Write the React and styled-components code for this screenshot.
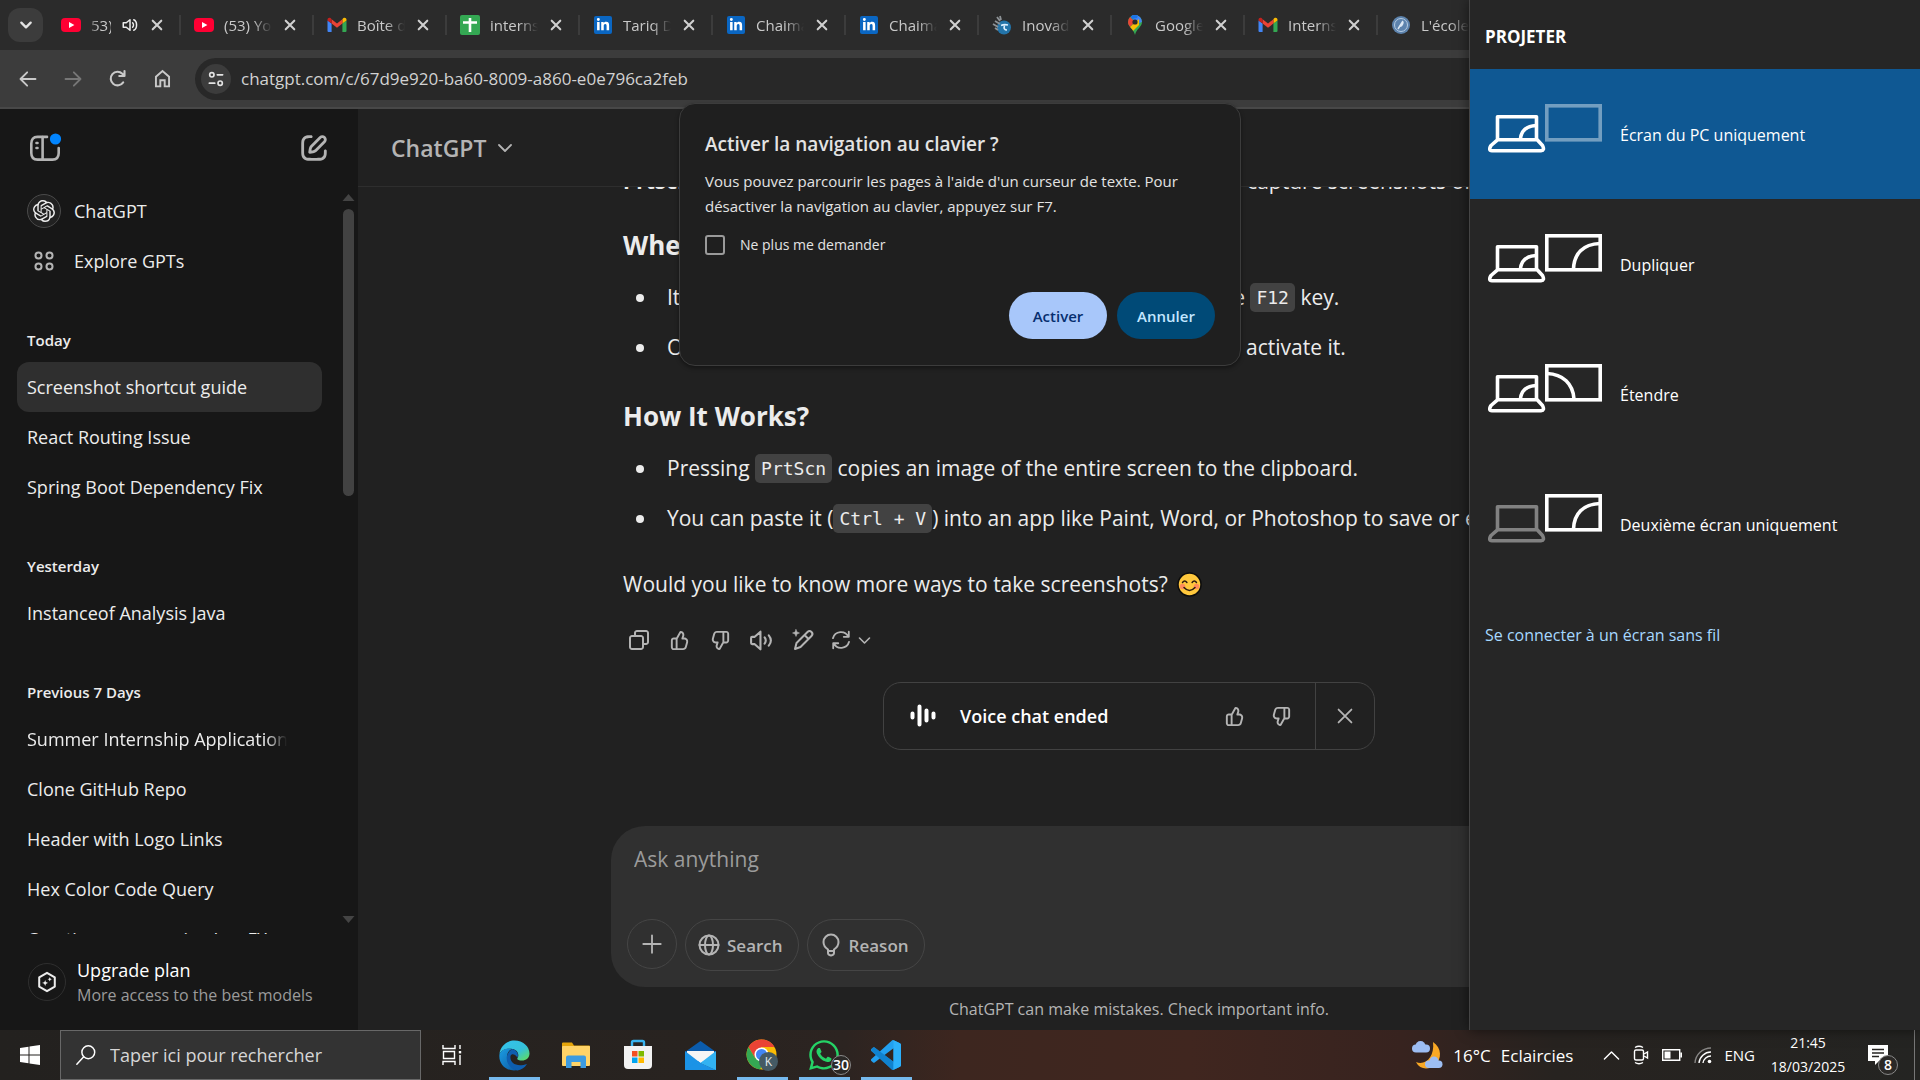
import React from "react";
import styled, { createGlobalStyle, css } from "styled-components";
import { SiOpenai } from "react-icons/si";
import { FaWhatsapp, FaLinkedinIn } from "react-icons/fa";

const Global = createGlobalStyle`
  *, *::before, *::after { box-sizing: border-box; }
  html, body, #root { margin: 0; height: 100%; }
  body {
    overflow: hidden;
    background: #212121;
    color: #ececec;
    font-family: "Open Sans", "Noto Sans", sans-serif;
    font-size: 16px;
  }
  button, input { font: inherit; color: inherit; background: none; border: 0; padding: 0; margin: 0; }
  button { cursor: pointer; }
  a { color: inherit; text-decoration: none; }
  h1, h2, h3, p, ul { margin: 0; padding: 0; }
  ul { list-style: none; }
  svg { display: block; flex: none; }
`;

const Desktop = styled.div`
  position: relative;
  display: flex;
  flex-direction: column;
  height: 100vh;
  overflow: hidden;
`;

/* ---------- shared drawing helpers ---------- */

const Stroke = ({ size = 24, box = 24, w = 2, children, ...rest }) => (
  <svg width={size} height={size} viewBox={`0 0 ${box} ${box}`} fill="none" stroke="currentColor"
    strokeWidth={w} strokeLinecap="round" strokeLinejoin="round" aria-hidden="true" {...rest}>
    {children}
  </svg>
);
const Solid = ({ size = 24, children, ...rest }) => (
  <svg width={size} height={size} viewBox="0 0 24 24" fill="currentColor" aria-hidden="true" {...rest}>
    {children}
  </svg>
);

const THUMB =
  "M12.1318 2.50389C12.3321 2.15338 12.7235 1.95768 13.124 2.00775L13.5778 2.06447C16.0449 2.37286 17.636 4.83353 16.9048 7.20993L16.354 8.99999H17.0722C19.7097 8.99999 21.6253 11.5079 20.9313 14.0525L19.5677 19.0525C19.0931 20.7927 17.5124 22 15.7086 22H6C4.34315 22 3 20.6568 3 19V12C3 10.3431 4.34315 8.99999 6 8.99999H8.25C8.38866 8.99999 8.51661 8.92558 8.58493 8.80494L12.1318 2.50389ZM10 20H15.7086C16.6105 20 17.4008 19.3964 17.6381 18.5262L19.0018 13.5262C19.3488 12.2539 18.391 11 17.0722 11H15C14.6827 11 14.3841 10.8494 14.1956 10.5941C14.0071 10.3388 13.9509 10.0092 14.0442 9.70591L14.9932 6.62175C15.3384 5.49984 14.6484 4.34036 13.5319 4.08468L10.3279 9.78656C10.23 9.97 10.12 10.13 10 10.28V20ZM8 11V20H6C5.44772 20 5 19.5523 5 19V12C5 11.4477 5.44772 11 6 11H8Z";
const ThumbUp = ({ size }) => <Solid size={size}><path fillRule="evenodd" d={THUMB} /></Solid>;
const ThumbDown = ({ size }) => (
  <Solid size={size}><path fillRule="evenodd" transform="rotate(180 12 12)" d={THUMB} /></Solid>
);
const CopyIcon = ({ size }) => (
  <Solid size={size}>
    <path fillRule="evenodd" d="M7 5C7 3.34315 8.34315 2 10 2H19C20.6569 2 22 3.34315 22 5V14C22 15.6569 20.6569 17 19 17H17V19C17 20.6569 15.6569 22 14 22H5C3.34315 22 2 20.6569 2 19V10C2 8.34315 3.34315 7 5 7H7V5ZM9 7H14C15.6569 7 17 8.34315 17 10V15H19C19.5523 15 20 14.5523 20 14V5C20 4.44772 19.5523 4 19 4H10C9.44772 4 9 4.44772 9 5V7ZM5 9C4.44772 9 4 9.44772 4 10V19C4 19.5523 4.44772 20 5 20H14C14.5523 20 15 19.5523 15 19V10C15 9.44772 14.5523 9 14 9H5Z" />
  </Solid>
);
const NewChatIcon = () => (
  <Solid size={34}>
    <path d="M15.6729 3.91287C16.8918 2.69392 18.8682 2.69392 20.0871 3.91287C21.3061 5.13182 21.3061 7.10813 20.0871 8.32708L14.1499 14.2643C13.3849 15.0293 12.3925 15.5255 11.3215 15.6785L9.14142 15.9899C8.82983 16.0344 8.51546 15.9297 8.29289 15.7071C8.07033 15.4845 7.96554 15.1701 8.01005 14.8586L8.32149 12.6785C8.47449 11.6075 8.97072 10.615 9.7357 9.85006L15.6729 3.91287ZM18.6729 5.32708C18.235 4.88918 17.525 4.88918 17.0871 5.32708L11.1499 11.2643C10.6909 11.7233 10.3932 12.3187 10.3014 12.9613L10.1785 13.8215L11.0386 13.6986C11.6812 13.6068 12.2767 13.3091 12.7357 12.8501L18.6729 6.91287C19.1108 6.47497 19.1108 5.76499 18.6729 5.32708ZM11 3.99929C11.0004 4.55157 10.5531 4.99963 10.0008 5.00007C9.00227 5.00084 8.29769 5.00827 7.74651 5.06064C7.20685 5.11191 6.88488 5.20117 6.63803 5.32695C6.07354 5.61457 5.6146 6.07351 5.32698 6.63799C5.19279 6.90135 5.10062 7.24904 5.05118 7.8542C5.00078 8.47105 5 9.26336 5 10.4V13.6C5 14.7366 5.00078 15.5289 5.05118 16.1457C5.10062 16.7509 5.19279 17.0986 5.32698 17.3619C5.6146 17.9264 6.07354 18.3854 6.63803 18.673C6.90138 18.8072 7.24907 18.8993 7.85424 18.9488C8.47108 18.9992 9.26339 19 10.4 19H13.6C14.7366 19 15.5289 18.9992 16.1458 18.9488C16.7509 18.8993 17.0986 18.8072 17.362 18.673C17.9265 18.3854 18.3854 17.9264 18.673 17.3619C18.7988 17.1151 18.8881 16.7931 18.9393 16.2535C18.9917 15.7023 18.9991 14.9977 18.9999 13.9992C19.0003 13.4469 19.4484 12.9995 20.0007 13C20.553 13.0004 21.0003 13.4485 20.9999 14.0007C20.9991 14.9789 20.9932 15.7808 20.9304 16.4426C20.8664 17.116 20.7385 17.7136 20.455 18.2699C19.9757 19.2107 19.2108 19.9756 18.27 20.455C17.6777 20.7568 17.0375 20.8826 16.3086 20.9421C15.6008 21 14.7266 21 13.6428 21H10.3572C9.27339 21 8.39925 21 7.69138 20.9421C6.96253 20.8826 6.32234 20.7568 5.73005 20.455C4.78924 19.9756 4.02433 19.2107 3.54497 18.2699C3.24318 17.6776 3.11737 17.0374 3.05782 16.3086C2.99998 15.6007 2.99999 14.7266 3 13.6428V10.3572C2.99999 9.27337 2.99998 8.39922 3.05782 7.69134C3.11737 6.96249 3.24318 6.3223 3.54497 5.73001C4.02433 4.7892 4.78924 4.0243 5.73005 3.54493C6.28633 3.26149 6.88399 3.13358 7.55735 3.06961C8.21919 3.00673 9.02103 3.00083 9.99922 3.00007C10.5515 2.99964 10.9996 3.447 11 3.99929Z" />
  </Solid>
);
const SidebarIcon = () => (
  <svg width="34" height="34" viewBox="0 0 34 34" fill="none" stroke="currentColor" strokeWidth="2.6" strokeLinecap="round" aria-hidden="true">
    <path d="M19 5.9H9.5Q3.3 5.9 3.3 12.5V22Q3.3 28.600 9.500 28.600H24.500Q30.700 28.600 30.700 22V17" />
    <path d="M14.600 6v22.600M8.500 12h1M8.500 17h1" />
    <circle cx="27.500" cy="8" r="5.600" fill="#0285ff" stroke="none" />
  </svg>
);
const ChevronDown = ({ size = 18, w = 2 }) => <Stroke size={size} w={w}><path d="M4 8l8 8 8-8" /></Stroke>;
const CloseX = ({ size = 12, w = 2.4 }) => <Stroke size={size} w={w} box={14}><path d="M2 2l10 10M12 2L2 12" /></Stroke>;

/* ---------- browser: tab strip ---------- */

const TabStrip = styled.div`
  display: flex;
  align-items: center;
  flex: none;
  height: 50px;
  padding-left: 8px;
  background: #2b2b2b;
  overflow: hidden;
`;
const TabSearch = styled.button`
  display: grid;
  place-items: center;
  flex: none;
  width: 35px;
  height: 34px;
  margin-right: 5px;
  border-radius: 12px;
  background: #3c3c3c;
  color: #e3e3e3;
`;
const Tab = styled.div`
  display: flex;
  align-items: center;
  flex: none;
  gap: 10px;
  width: 133px;
  height: 20px;
  padding: 0 14px 0 13px;
  border-right: 2px solid #3c3c3c;
`;
const TabTitle = styled.span`
  flex: 1;
  min-width: 0;
  overflow: hidden;
  white-space: nowrap;
  font-size: 15px;
  line-height: 20px;
  color: #c9c9c9;
  ${(p) => !p.$short && css`mask-image: linear-gradient(90deg, #000 60%, transparent);`}
  ${(p) => p.$short && css`mask-image: linear-gradient(90deg, #0006, #000 40%);`}
`;
const TabClose = styled.button`
  display: grid;
  place-items: center;
  width: 16px;
  height: 20px;
  color: #d0d0d0;
`;
const LinkedinTile = styled.span`
  display: grid;
  place-items: center;
  flex: none;
  width: 18px;
  height: 18px;
  margin: 0 1px;
  border-radius: 2px;
  background: #0a66c2;
  color: #fff;
  font-size: 14px;
`;

const YoutubeIcon = () => (
  <svg width="20" height="20" viewBox="0 0 20 20"><rect y="3" width="20" height="14" rx="4" fill="#ff0033" /><path d="M8 7l5.4 3L8 13z" fill="#fff" /></svg>
);
const GmailIcon = () => (
  <svg width="20" height="20" viewBox="0 0 20 20">
    <path d="M1 17h3.6V8.6L.5 5.4V16q0 1 1 1z" fill="#4285f4" />
    <path d="M15.4 17H18.5q1 0 1-1V5.4l-4.1 3.2z" fill="#34a853" />
    <path d="M15.4 4.3v4.3l4.1-3V4.8c0-2-1.9-2.6-3.3-1.6z" fill="#fbbc04" />
    <path d="M4.6 8.6V4.3L10 8.4l5.4-4.1v4.3L10 12.7z" fill="#ea4335" />
    <path d="M.5 4.8v.8l4.1 3V4.3l-.8-1.1C2.4 2.2.5 2.8.5 4.8z" fill="#c5221f" />
  </svg>
);
const SheetsIcon = () => (
  <svg width="20" height="20" viewBox="0 0 20 20"><rect width="20" height="20" rx="2" fill="#34a853" /><path d="M10 3v14M3 7.5h14" stroke="#fff" strokeWidth="2.6" /></svg>
);
const MapsIcon = () => (
  <svg width="20" height="20" viewBox="0 0 20 20">
    <defs><clipPath id="pin"><path d="M10 0a7 7 0 0 1 7 7c0 5-5.500 6.500-7 13C8.500 13.500 3 12 3 7a7 7 0 0 1 7-7z" /></clipPath></defs>
    <g clipPath="url(#pin)">
      <path d="M0 0h20v20H0z" fill="#34a853" /><path d="M4 -2L20 -2V5L13 9 10 7z" fill="#4285f4" />
      <path d="M0 4L5 2l5 5-6 6H0z" fill="#ea4335" /><path d="M4 13l10-9 0 6-7 7z" fill="#fbbc04" />
      <path d="M4 -2H14L12 3 7 4z" fill="#1a73e8" />
    </g>
    <circle cx="10" cy="7" r="2.600" fill="#2b2b2b" />
  </svg>
);
const InovaIcon = () => (
  <svg width="20" height="20" viewBox="0 0 20 20">
    <circle cx="12" cy="12.500" r="7" fill="#2374a9" />
    <path d="M9 10.500c2-1 5-1 7-.5M12.500 10.500c-1 3 0 4.500 2.500 4.500" stroke="#dcefff" strokeWidth="1.600" fill="none" />
    <path d="M3 6l5 3M1 9l5 3M5 2l3 4M8 1l1 4M3 13l3 2" stroke="#8d9296" strokeWidth="1.800" />
  </svg>
);
const SchoolIcon = () => (
  <svg width="20" height="20" viewBox="0 0 20 20">
    <circle cx="10" cy="10" r="9" fill="#5d83ad" /><circle cx="10" cy="10" r="6.500" fill="none" stroke="#b5cbe2" />
    <path d="M7 14l5-8M8 11c2 1 4-1 4-4" stroke="#dbe7f3" strokeWidth="1.500" fill="none" />
  </svg>
);
const InIcon = () => <LinkedinTile><FaLinkedinIn /></LinkedinTile>;
const SoundIcon = () => (
  <Stroke size={18} w={2}><path d="M3 9v6h4l5 4V5L7 9zM15.500 9c1.500 1.500 1.500 4.500 0 6M17 5c5 2 5 12 0 14" /></Stroke>
);

const TABS = [
  { icon: YoutubeIcon, title: "53)", sound: true },
  { icon: YoutubeIcon, title: "(53) YouTube" },
  { icon: GmailIcon, title: "Boîte de réception" },
  { icon: SheetsIcon, title: "internship" },
  { icon: InIcon, title: "Tariq Dahbi" },
  { icon: InIcon, title: "Chaimae" },
  { icon: InIcon, title: "Chaimae" },
  { icon: InovaIcon, title: "Inovadis" },
  { icon: MapsIcon, title: "Google Maps" },
  { icon: GmailIcon, title: "Internship" },
  { icon: SchoolIcon, title: "L'école" },
];

/* ---------- browser: toolbar ---------- */

const Toolbar = styled.div`
  display: flex;
  align-items: center;
  flex: none;
  height: 59px;
  padding-left: 5px;
  padding-right: 12px;
  background: #3c3c3c;
  border-bottom: 2px solid #484848;
`;
const NavButton = styled.button`
  display: grid;
  place-items: center;
  flex: none;
  width: 45px;
  height: 42px;
  color: ${(p) => (p.disabled ? "#777" : "#c9c9c9")};
`;
const AddressBar = styled.label`
  display: flex;
  align-items: center;
  flex: 1;
  gap: 10px;
  height: 42px;
  margin-left: 10px;
  padding-left: 6px;
  border-radius: 21px;
  background: #282828;
`;
const SiteInfo = styled.span`
  display: grid;
  place-items: center;
  width: 30px;
  height: 30px;
  border-radius: 50%;
  background: #3c3c3c;
  color: #e3e3e3;
`;
const UrlInput = styled.input`
  flex: 1;
  min-width: 0;
  font-size: 17px;
  line-height: 24px;
  color: #d2d2d2;
  outline: none;
`;

/* ---------- chat page ---------- */

const Page = styled.div`
  display: flex;
  flex: 1;
  min-height: 0;
`;
const Sidebar = styled.aside`
  display: flex;
  flex-direction: column;
  flex: none;
  width: 358px;
  background: #171717;
`;
const SidebarTop = styled.div`
  display: flex;
  align-items: center;
  justify-content: space-between;
  flex: none;
  height: 77px;
  padding: 0 27px 0 28px;
  color: #b4b4b4;
`;
const IconButton = styled.button`
  display: grid;
  place-items: center;
  color: inherit;
`;
const SidebarScroll = styled.div`
  display: flex;
  justify-content: space-between;
  flex: 1;
  min-height: 0;
  padding: 0 3px 0 17px;
`;
const History = styled.nav`
  width: 305px;
  overflow: hidden;
`;
const GroupTitle = styled.h3`
  height: 42px;
  margin-top: 34px;
  padding-left: 10px;
  font-size: 15px;
  font-weight: 600;
  line-height: 41px;
`;
const HistoryLink = styled.a`
  display: flex;
  align-items: center;
  gap: 13px;
  height: 50px;
  padding: 0 35px 0 10px;
  border-radius: 12px;
  font-size: 18px;
  line-height: 24px;
  white-space: nowrap;
  background: ${(p) => (p.$active ? "#2f2f2f" : "transparent")};
`;
const LinkText = styled.span`
  min-width: 0;
  overflow: hidden;
  ${(p) => p.$fade && css`mask-image: linear-gradient(90deg, #000 92%, transparent);`}
`;
const RoundBadge = styled.span`
  display: grid;
  place-items: center;
  flex: none;
  width: 34px;
  height: 34px;
  border: 1px solid ${(p) => (p.$plain ? "transparent" : "#4a4a4a")};
  border-radius: 50%;
  background: ${(p) => (p.$plain ? "transparent" : "#212121")};
  color: ${(p) => (p.$plain ? "#b4b4b4" : "#ececec")};
  font-size: 22px;
`;
const Scrollbar = styled.div`
  display: flex;
  flex-direction: column;
  align-items: center;
  width: 13px;
  padding: 8px 0 11px;
  color: #444;
`;
const Thumb = styled.div`
  width: 11px;
  height: 287px;
  margin: 8px 0 auto;
  border-radius: 6px;
  background: #424242;
`;
const Upgrade = styled.a`
  display: flex;
  align-items: center;
  flex: none;
  gap: 11px;
  height: 96px;
  padding-left: 28px;
`;
const UpgradeBadge = styled.span`
  display: grid;
  place-items: center;
  width: 38px;
  height: 38px;
  border: 1px solid #2f2f2f;
  border-radius: 50%;
`;
const UpgradeTitle = styled.span`
  display: block;
  margin-top: 2px;
  font-size: 18px;
  line-height: 25px;
  color: #fff;
`;
const UpgradeNote = styled.span`
  display: block;
  font-size: 16px;
  line-height: 25px;
  color: #9b9b9b;
`;

const Main = styled.main`
  display: flex;
  flex-direction: column;
  flex: 1;
  min-width: 0;
  background: #212121;
`;
const ChatHeader = styled.header`
  display: flex;
  align-items: center;
  flex: none;
  height: 78px;
  padding: 0 33px;
  border-bottom: 1px solid #2e2e2e;
`;
const ModelButton = styled.button`
  display: flex;
  align-items: center;
  gap: 10px;
  font-size: 23px;
  font-weight: 600;
  line-height: 32px;
  color: #b4b4b4;
`;
const Thread = styled.div`
  display: flex;
  flex-direction: column;
  justify-content: flex-end;
  align-items: center;
  flex: 1;
  min-height: 0;
  padding: 0 20px 76px 0;
  overflow: hidden;
`;
const Message = styled.article`
  flex: none;
  width: 100%;
  max-width: 1012px;
  font-size: 21px;
  line-height: 35px;
  white-space: nowrap;
`;
const MessageHeading = styled.h2`
  margin: 29px 0 17px;
  font-size: 26px;
  font-weight: 700;
  line-height: 35px;
  ul + & { margin-top: 34px; }
`;
const Bullets = styled.ul`
  display: grid;
  gap: 15px;
`;
const Bullet = styled.li`
  display: flex;
  align-items: center;
  height: 35px;
  white-space: pre;
  &::before {
    content: "";
    flex: none;
    width: 8px;
    height: 8px;
    margin: 0 23px 0 13px;
    border-radius: 50%;
    background: #ececec;
  }
`;
const Closing = styled.p`
  display: flex;
  align-items: center;
  gap: 9px;
  margin-top: 31px;
`;
const Code = styled.code`
  height: 29px;
  padding: 0 6px;
  border-radius: 5px;
  background: #424242;
  font-family: "DejaVu Sans Mono", monospace;
  font-size: 18px;
  line-height: 29px;
`;
const Actions = styled.div`
  display: flex;
  margin: 18px 0 22px -5px;
  color: #b4b4b4;
`;
const Action = styled.button`
  display: flex;
  align-items: center;
  justify-content: center;
  gap: 5px;
  width: ${(p) => (p.$wide ? "56px" : "41px")};
  height: 40px;
`;
const VoiceCard = styled.section`
  display: flex;
  align-items: stretch;
  flex: none;
  width: 492px;
  height: 68px;
  border: 1px solid #424242;
  border-radius: 18px;
  color: #b4b4b4;
`;
const VoiceBody = styled.div`
  display: flex;
  align-items: center;
  flex: 1;
  gap: 24px;
  padding: 0 22px 0 26px;
`;
const VoiceTitle = styled.strong`
  flex: 1;
  font-size: 18px;
  font-weight: 600;
  line-height: 25px;
  color: #fff;
`;
const VoiceClose = styled.button`
  display: grid;
  place-items: center;
  width: 59px;
  border-left: 1px solid #424242;
`;
const Composer = styled.form`
  display: flex;
  flex-direction: column;
  align-self: center;
  flex: none;
  width: 100%;
  max-width: 1056px;
  height: 161px;
  padding: 16px 16px 0;
  border-radius: 34px;
  background: #303030;
`;
const Prompt = styled.input`
  height: 34px;
  margin: 0 7px 43px;
  font-size: 21px;
  outline: none;
  &::placeholder { color: #9b9b9b; opacity: 1; }
`;
const Tools = styled.div`
  display: flex;
  align-items: flex-start;
  gap: 8px;
`;
const Tool = styled.button`
  display: flex;
  align-items: center;
  justify-content: center;
  gap: 6px;
  height: ${(p) => (p.$round ? "50px" : "52px")};
  ${(p) => (p.$round ? "width: 50px;" : "padding: 0 15px 0 11px;")}
  border: 1px solid #454545;
  border-radius: 26px;
  font-size: 17px;
  font-weight: 600;
  color: #b4b4b4;
`;
const Notice = styled.p`
  flex: none;
  height: 43px;
  font-size: 16px;
  line-height: 45px;
  text-align: center;
  color: #b4b4b4;
`;

/* ---------- caret browsing dialog ---------- */

const Dialog = styled.section`
  position: absolute;
  top: 103px;
  left: 50%;
  transform: translateX(-50%);
  width: 562px;
  padding: 25px 25px 26px;
  border: 1px solid #3c3c3c;
  border-radius: 16px;
  background: #1f1f1f;
  box-shadow: 0 2px 4px #0006;
  color: #e3e3e3;
`;
const DialogTitle = styled.h2`
  margin-bottom: 10px;
  font-size: 19px;
  font-weight: 600;
  line-height: 30px;
`;
const DialogText = styled.p`
  font-size: 15px;
  line-height: 25px;
`;
const CheckRow = styled.label`
  display: flex;
  align-items: center;
  gap: 15px;
  margin: 15px 0 36px;
  font-size: 14px;
  line-height: 22px;
`;
const Check = styled.input.attrs({ type: "checkbox" })`
  appearance: none;
  width: 20px;
  height: 20px;
  border: 2px solid #9a9a9a;
  border-radius: 3px;
`;
const DialogButtons = styled.div`
  display: flex;
  justify-content: flex-end;
  gap: 10px;
`;
const DialogButton = styled.button`
  width: 98px;
  height: 47px;
  border-radius: 24px;
  font-size: 15px;
  font-weight: 600;
  background: ${(p) => (p.$primary ? "#a8c7fa" : "#004a77")};
  color: ${(p) => (p.$primary ? "#062e6f" : "#c2e7ff")};
`;

/* ---------- projection flyout ---------- */

const Flyout = styled.aside`
  position: absolute;
  top: 0;
  right: 0;
  bottom: 50px;
  width: 451px;
  border-left: 1px solid #454545;
  background: #262626;
  box-shadow: 0 0 12px #0008;
  color: #fff;
`;
const FlyoutTitle = styled.h2`
  height: 69px;
  padding-left: 15px;
  font-size: 17px;
  font-weight: 700;
  line-height: 73px;
`;
const Mode = styled.button`
  display: flex;
  align-items: center;
  gap: 18px;
  width: 100%;
  height: 130px;
  padding: 2px 18px 0;
  text-align: left;
  font-size: 16px;
  background: ${(p) => (p.$active ? "#0f5893" : "transparent")};
`;
const ModeArt = styled.svg`
  margin-bottom: 14px;
`;
const WirelessLink = styled.a`
  display: block;
  padding: 34px 15px;
  font-size: 16px;
  line-height: 24px;
  color: #a6d8ff;
`;

const ModeIcon = ({ mode }) => {
  const laptopOff = mode === "second";
  const screenOff = mode === "pc";
  return (
    <ModeArt width="114" height="49" viewBox="0 0 114 49" fill="none" stroke="#fff" strokeWidth="3.600" aria-hidden="true">
      <g opacity={laptopOff ? 0.42 : 1} strokeLinejoin="round">
        <path d="M9.500 35V12.800H48.500V35L54.500 41.500Q57 46.500 53 46.700H4Q0 46.500 3 41.500L9.500 35.800H48.500" />
        {!laptopOff && <path d="M32.500 35Q33.500 22.500 48 21.500" />}
      </g>
      <g opacity={screenOff ? 0.42 : 1}>
        <rect x="58.800" y="1.800" width="53.400" height="34" />
        {(mode === "duplicate" || mode === "second") && <path d="M85.500 35C86 20 95 10 112 9.500" />}
        {mode === "extend" && <path d="M59 9.500C75 10 85 20 86 35" />}
      </g>
    </ModeArt>
  );
};
const MODES = [
  ["pc", "Écran du PC uniquement"],
  ["duplicate", "Dupliquer"],
  ["extend", "Étendre"],
  ["second", "Deuxième écran uniquement"],
];

/* ---------- taskbar ---------- */

const Taskbar = styled.footer`
  display: flex;
  align-items: stretch;
  flex: none;
  height: 50px;
  background: linear-gradient(90deg, #23211f 0%, #282320 36%, #2c2421 44%, #3d261f 50%, #40261f 62%, #37231f 73%, #272320 81%, #242422 100%);
  color: #fff;
`;
const StartButton = styled.button`
  display: grid;
  place-items: center;
  width: 60px;
`;
const TaskSearch = styled.label`
  display: flex;
  align-items: center;
  gap: 13px;
  width: 361px;
  padding-left: 14px;
  border: 1px solid #686868;
  background: #333;
`;
const TaskInput = styled.input`
  flex: 1;
  min-width: 0;
  font-size: 18px;
  outline: none;
  &::placeholder { color: #d6d6d6; opacity: 1; }
`;
const TaskButton = styled.button`
  display: grid;
  place-items: center;
  width: 62px;
  ${(p) => p.$open && css`background: linear-gradient(#76b9ed, #76b9ed) bottom center / 51px 3px no-repeat;`}
`;
const Tray = styled.div`
  display: flex;
  align-items: center;
  margin-left: auto;
`;
const Weather = styled.button`
  display: flex;
  align-items: center;
  gap: 10px;
  margin-right: 30px;
  font-size: 17px;
  white-space: nowrap;
`;
const TrayIcons = styled.div`
  display: flex;
  align-items: center;
  gap: 12px;
  margin-right: 15px;
  font-size: 15px;
`;
const Clock = styled.time`
  width: 76px;
  font-size: 14px;
  line-height: 24px;
  text-align: center;
  white-space: nowrap;
`;
const Notifications = styled.button`
  position: relative;
  display: grid;
  place-items: center;
  width: 42px;
  height: 50px;
  margin: 0 15px 0 11px;
`;
const CountBadge = styled.span`
  position: absolute;
  right: ${(p) => p.$right}px;
  bottom: 5px;
  display: grid;
  place-items: center;
  min-width: 20px;
  height: 20px;
  border: 1px solid #888;
  border-radius: 10px;
  background: #2b2927;
  font-size: 14px;
  font-weight: 600;
  line-height: 18px;
`;
const AppWithBadge = styled.span`
  position: relative;
  display: grid;
  place-items: center;
  width: 62px;
  height: 50px;
`;
const ShowDesktop = styled.div`
  width: 6px;
  height: 50px;
  border-left: 1px solid #777;
`;

const EdgeIcon = () => (
  <svg width="31" height="31" viewBox="0 0 31 31">
    <defs>
      <linearGradient id="eg" x1="0" y1="0" x2="1" y2="1"><stop offset="0" stopColor="#33c2f0" /><stop offset=".6" stopColor="#35c1d8" /><stop offset="1" stopColor="#66e04f" /></linearGradient>
      <linearGradient id="eb" x1="0" y1="0" x2="1" y2="1"><stop offset="0" stopColor="#1b9de2" /><stop offset="1" stopColor="#0c59a4" /></linearGradient>
    </defs>
    <path d="M.5 14C1 6 8 .5 15.500 .5 24 .5 30.500 6.500 30.500 13.500c0 4.500-3.500 7-7.500 7-3.500 0-5.500-1-4.500-2.500 2-3 .5-8-5-9C7 8 2 10.500 .5 14z" fill="url(#eg)" />
    <path d="M.5 14C3 9 9 7.500 13.500 9c-4 1-6 5-5.500 9 .5 6 5 11 11 12C8 32.500-1 24.500.5 14z" fill="url(#eb)" />
    <path d="M11.500 16c-1 7 6 11.500 16.500 8-2.500 4-6 6-9.500 6.500C11 29 6.500 22 8 16c.8-3 3-6 5.500-7 4 1 6.500 5 5 8.500C16 14 12.500 13 11.500 16z" fill="#0e5eb0" />
  </svg>
);
const FolderIcon = () => (
  <svg width="30" height="26" viewBox="0 0 30 26">
    <path d="M1 1.500Q1 .5 2 .5h9l2 3H28q1 0 1 1V10H1z" fill="#e5a50a" />
    <rect x="1" y="4" width="28" height="20" rx="1" fill="#ffd367" />
    <path d="M5 26V15.500q0-2 2-2H23q2 0 2 2V26h-5.500v-6h-9v6z" fill="#3c9be0" />
  </svg>
);
const StoreIcon = () => (
  <svg width="30" height="32" viewBox="0 0 30 32">
    <path d="M9 8V3.500Q9 2 10.500 2h9Q21 2 21 3.500V8" fill="none" stroke="#39b3ee" strokeWidth="2.400" />
    <path d="M1 7h28v19q0 4-4 4H5q-4 0-4-4z" fill="#f2f2f2" />
    <path d="M9 12h5.500v5.500H9z" fill="#f25022" /><path d="M15.500 12H21v5.500h-5.500z" fill="#7fba00" />
    <path d="M9 18.500h5.500V24H9z" fill="#00a4ef" /><path d="M15.500 18.500H21V24h-5.500z" fill="#ffb900" />
  </svg>
);
const MailIcon = () => (
  <svg width="31" height="29" viewBox="0 0 31 29">
    <path d="M0 11L15.500 0 31 11v4H0z" fill="#0b5cad" />
    <path d="M2 10H29V22H2z" fill="#f5f5f5" />
    <path d="M0 10L15.500 22 0 29z" fill="#1b93e6" />
    <path d="M31 10L15.500 22 31 29z" fill="#32b2f2" />
    <path d="M0 29L15.500 22 0 14z" fill="#1b93e6" />
    <path d="M0 29L13 20 15.500 22 31 29z" fill="#1b93e6" />
    <path d="M31 29L15.500 22 31 12z" fill="#32b2f2" />
  </svg>
);
const ChromeIcon = () => (
  <svg width="32" height="32" viewBox="0 0 32 32">
    <circle cx="15.500" cy="15.500" r="15" fill="#fbbc04" />
    <path d="M2.500 8A15 15 0 0 1 28.500 8H15.500L9 19z" fill="#ea4335" />
    <path d="M2.500 8L9 19l9 3-4 8.400A15 15 0 0 1 2.500 8z" fill="#34a853" />
    <circle cx="15.500" cy="15.500" r="7" fill="#fff" /><circle cx="15.500" cy="15.500" r="5.500" fill="#4285f4" />
    <circle cx="22.500" cy="22.500" r="9.500" fill="#455a64" />
    <text x="22.500" y="27" fill="#e6eaec" fontSize="12" fontFamily="Open Sans, sans-serif" textAnchor="middle">K</text>
  </svg>
);
const CodeIcon = () => (
  <svg width="30" height="30" viewBox="0 0 24 24">
    <path fill="#22a0f0" fillRule="evenodd" d="M23.150 2.587L18.210.210a1.494 1.494 0 0 0-1.705.290l-9.460 8.630-4.120-3.128a.999.999 0 0 0-1.276.057L.327 7.261A1 1 0 0 0 .326 8.740L3.899 12 .326 15.260a1 1 0 0 0 .001 1.479L1.650 17.940a.999.999 0 0 0 1.276.057l4.120-3.128 9.460 8.630a1.492 1.492 0 0 0 1.704.290l4.942-2.377A1.500 1.500 0 0 0 24 20.060V3.939a1.500 1.500 0 0 0-.850-1.352zm-5.146 14.861L10.826 12l7.178-5.448v10.896z" />
    <path fill="#0b78c4" d="M.327 7.261L1.650 6.060a1 1 0 0 1 1.276-.057L18 17.448V23.700a1.500 1.500 0 0 1-1.500-.2L.327 8.740z" opacity=".75" />
    <path fill="#2cb0fb" d="M18 .2l5.150 2.387Q24 3.100 24 3.940V20.060q0 .85-.85 1.350L18 23.800z" />
  </svg>
);
const WeatherIcon = () => (
  <svg width="31" height="30" viewBox="0 0 31 30">
    <path d="M21 2c9 6 9 17 2 23-6 5-15 5-19-3 9 4 19-5 17-20z" fill="#f9a825" />
    <g fill="#9dbdf2"><circle cx="8.500" cy="6" r="5" /><rect x="0" y="4.500" width="18" height="8" rx="4" /><circle cx="22" cy="21" r="4.500" /><rect x="13" y="20.500" width="17.500" height="7.500" rx="3.700" /></g>
  </svg>
);
const Emoji = () => (
  <svg width="25" height="25" viewBox="0 0 25 25" role="img" aria-label="smiling face">
    <circle cx="12.500" cy="12.500" r="11.500" fill="#ffc83d" stroke="#0c0c0c" strokeWidth="1.500" />
    <circle cx="5.500" cy="14.500" r="2.800" fill="#ff8b5a" /><circle cx="19.500" cy="14.500" r="2.800" fill="#ff8b5a" />
    <path d="M5.500 10.500q2.200-3 4.400 0M15.100 10.500q2.200-3 4.400 0M7 15.500q5.500 6 11 0" fill="none" stroke="#2b1a10" strokeWidth="1.500" strokeLinecap="round" />
  </svg>
);

const GROUPS = [
  { title: "Today", items: ["Screenshot shortcut guide", "React Routing Issue", "Spring Boot Dependency Fix"] },
  { title: "Yesterday", items: ["Instanceof Analysis Java"] },
  {
    title: "Previous 7 Days",
    items: ["Summer Internship Application", "Clone GitHub Repo", "Header with Logo Links", "Hex Color Code Query", "Creating scenes using JavaFX"],
  },
];

export default function App() {
  return (
    <Desktop>
      <Global />
      <TabStrip>
        <TabSearch aria-label="Rechercher dans les onglets"><ChevronDown size={14} w={4} /></TabSearch>
        {TABS.map(({ icon: Icon, title, sound }, i) => (
          <Tab key={i}>
            <Icon />
            <TabTitle $short={sound}>{title}</TabTitle>
            {sound && <SoundIcon />}
            <TabClose aria-label="Fermer"><CloseX /></TabClose>
          </Tab>
        ))}
      </TabStrip>

      <Toolbar>
        <NavButton aria-label="Retour"><Stroke size={20} w={2.2}><path d="M21 12H3M11 4l-8 8 8 8" /></Stroke></NavButton>
        <NavButton aria-label="Avancer" disabled><Stroke size={20} w={2.2}><path d="M3 12h18M13 4l8 8-8 8" /></Stroke></NavButton>
        <NavButton aria-label="Actualiser"><Stroke size={21} w={2.4}><path d="M18.500 16.500A7.800 7.800 0 1 1 17.500 6.500L20 9M20 3.500V9.200H14" /></Stroke></NavButton>
        <NavButton aria-label="Accueil"><Stroke size={21} w={2.2} strokeLinejoin="miter"><path d="M4.500 10L12 3.500 19.500 10V21H14.500V14H9.500V21H4.500z" /></Stroke></NavButton>
        <AddressBar>
          <SiteInfo>
            <Stroke size={20} w={2}><circle cx="7" cy="7" r="2.600" /><path d="M13.500 7H20M4 17h6.500" /><circle cx="17" cy="17" r="2.600" /></Stroke>
          </SiteInfo>
          <UrlInput aria-label="Adresse" defaultValue="chatgpt.com/c/67d9e920-ba60-8009-a860-e0e796ca2feb" />
        </AddressBar>
      </Toolbar>

      <Page>
        <Sidebar>
          <SidebarTop>
            <IconButton aria-label="Close sidebar"><SidebarIcon /></IconButton>
            <IconButton aria-label="New chat"><NewChatIcon /></IconButton>
          </SidebarTop>
          <SidebarScroll>
            <History>
              <HistoryLink href="#"><RoundBadge><SiOpenai /></RoundBadge>ChatGPT</HistoryLink>
              <HistoryLink href="#">
                <RoundBadge $plain>
                  <Stroke size={22} w={2.2}><circle cx="6" cy="6" r="3.300" /><circle cx="18" cy="6" r="3.300" /><circle cx="6" cy="18" r="3.300" /><circle cx="18" cy="18" r="3.300" /></Stroke>
                </RoundBadge>
                Explore GPTs
              </HistoryLink>
              {GROUPS.map((g) => (
                <React.Fragment key={g.title}>
                  <GroupTitle>{g.title}</GroupTitle>
                  {g.items.map((t) => (
                    <HistoryLink href="#" key={t} $active={t.startsWith("Screenshot")}>
                      <LinkText $fade={t.startsWith("Summer")}>{t}</LinkText>
                    </HistoryLink>
                  ))}
                </React.Fragment>
              ))}
            </History>
            <Scrollbar>
              <svg width="13" height="7" viewBox="0 0 12 7"><path d="M0 7L6 0l6 7z" fill="currentColor" /></svg>
              <Thumb />
              <svg width="13" height="7" viewBox="0 0 12 7"><path d="M0 0l6 7 6-7z" fill="currentColor" /></svg>
            </Scrollbar>
          </SidebarScroll>
          <Upgrade href="#">
            <UpgradeBadge>
              <Stroke size={22} w={2.2}>
                <path d="M12 2l8.500 5v10L12 22l-8.500-5V7z" />
                <path d="M10 9.500c.5 2.500 1 3 3.500 3.500-2.500.5-3 1-3.500 3.500-.5-2.500-1-3-3.500-3.500 2.500-.5 3-1 3.500-3.500zM15 6.500c.4 1.600.8 2 2.500 2.500-1.700.5-2.100.9-2.500 2.500-.4-1.600-.8-2-2.500-2.500 1.700-.5 2.100-.9 2.500-2.500z" fill="currentColor" stroke="none" />
              </Stroke>
            </UpgradeBadge>
            <span>
              <UpgradeTitle>Upgrade plan</UpgradeTitle>
              <UpgradeNote>More access to the best models</UpgradeNote>
            </span>
          </Upgrade>
        </Sidebar>

        <Main>
          <ChatHeader>
            <ModelButton>ChatGPT <ChevronDown size={18} w={2.4} /></ModelButton>
          </ChatHeader>
          <Thread>
            <Message>
              <p><strong>PrtScn</strong> (Print Screen) is a key on most keyboards that lets users capture screenshots of</p>
              <MessageHeading>Where Is the Key?</MessageHeading>
              <Bullets>
                <Bullet>{"It is usually located in the upper-right corner, right near the "}<Code>F12</Code>{" key."}</Bullet>
                <Bullet>On some laptops, you may also have to press the Fn key to activate it.</Bullet>
              </Bullets>
              <MessageHeading>How It Works?</MessageHeading>
              <Bullets>
                <Bullet>{"Pressing "}<Code>PrtScn</Code>{" copies an image of the entire screen to the clipboard."}</Bullet>
                <Bullet>{"You can paste it ("}<Code>Ctrl + V</Code>{") into an app like Paint, Word, or Photoshop to save or edit it."}</Bullet>
              </Bullets>
              <Closing>Would you like to know more ways to take screenshots? <Emoji /></Closing>
              <Actions>
                <Action aria-label="Copy"><CopyIcon size={24} /></Action>
                <Action aria-label="Good response"><ThumbUp size={23} /></Action>
                <Action aria-label="Bad response"><ThumbDown size={23} /></Action>
                <Action aria-label="Read aloud">
                  <Stroke size={25} w={2}><path d="M2 9.500v5q0 1 1 1H5.500L11 20.500V3.500L5.500 8.500H3q-1 0-1 1zM15 9q2.200 3 0 6M19 7q4 5 0 10" /></Stroke>
                </Action>
                <Action aria-label="Edit in canvas">
                  <Stroke size={24} w={2}><path d="M4 21l1.500-6L16.500 4a2.800 2.800 0 0 1 4 4L9.500 19zM13.500 7l4 4" /><path d="M5 1.500l1 2.500 2.500 1L6 6 5 8.500 4 6 1.500 5 4 4z" fill="currentColor" strokeWidth=".5" /></Stroke>
                </Action>
                <Action aria-label="Regenerate" $wide>
                  <Stroke size={22} w={2}><path d="M20.500 3v5.500H15M20 8.500A9 9 0 0 0 3.200 10M3.500 21v-5.500H9M4 15.500A9 9 0 0 0 20.800 14" /></Stroke>
                  <ChevronDown size={15} w={2.6} />
                </Action>
              </Actions>
            </Message>
            <VoiceCard>
              <VoiceBody>
                <svg width="26" height="26" viewBox="0 0 26 26" stroke="#fff" strokeWidth="4" strokeLinecap="round"><path d="M2.500 10.500v4M9.500 3.500v18M16.500 7.500v10M23.500 10.500v4" /></svg>
                <VoiceTitle>Voice chat ended</VoiceTitle>
                <IconButton aria-label="Good"><ThumbUp size={23} /></IconButton>
                <IconButton aria-label="Bad"><ThumbDown size={23} /></IconButton>
              </VoiceBody>
              <VoiceClose aria-label="Dismiss"><CloseX size={18} w={1.4} /></VoiceClose>
            </VoiceCard>
          </Thread>
          <Composer onSubmit={(e) => e.preventDefault()}>
            <Prompt aria-label="Message" placeholder="Ask anything" />
            <Tools>
              <Tool type="button" $round aria-label="Add"><Stroke size={22} w={2}><path d="M12 2.500v19M2.500 12h19" /></Stroke></Tool>
              <Tool type="button">
                <Stroke size={24} w={2}><circle cx="12" cy="12" r="9.500" /><ellipse cx="12" cy="12" rx="4" ry="9.500" /><path d="M2.500 12h19" /></Stroke>
                Search
              </Tool>
              <Tool type="button">
                <Stroke size={24} w={2}><path d="M9 16.500Q4.500 13.500 4.500 9a7.500 7.500 0 0 1 15 0q0 4.500-4.500 7.500V20q0 2-3 2.500-3-.5-3-2.500zM9 18h6" /></Stroke>
                Reason
              </Tool>
            </Tools>
          </Composer>
          <Notice>ChatGPT can make mistakes. Check important info.</Notice>
        </Main>
      </Page>

      <Taskbar>
        <StartButton aria-label="Démarrer">
          <svg width="20" height="20" viewBox="0 0 20 20" fill="#fff"><path d="M0 3l8.500-1.200V9.500H0zM9.500 1.600L20 0v9.500H9.500zM0 10.500h8.500v7.700L0 17zM9.500 10.500H20V20L9.500 18.400z" /></svg>
        </StartButton>
        <TaskSearch>
          <Stroke size={22} w={1.6}><circle cx="14.500" cy="9" r="7" /><path d="M9.500 14L2 22" /></Stroke>
          <TaskInput aria-label="Rechercher" placeholder="Taper ici pour rechercher" />
        </TaskSearch>
        <TaskButton aria-label="Vue des tâches">
          <svg width="20" height="20" viewBox="0 0 20 20" fill="none" stroke="#fff" strokeWidth="1.400"><path d="M1 0v3.500h12V0M1 20v-3.500h12V20M1.500 6.500h11v7h-11zM18 0v4M18 10v10" /><path d="M16.800 6h2.400v2.400h-2.400z" fill="#fff" stroke="none" /></svg>
        </TaskButton>
        <TaskButton $open aria-label="Edge"><EdgeIcon /></TaskButton>
        <TaskButton aria-label="Explorateur"><FolderIcon /></TaskButton>
        <TaskButton aria-label="Store"><StoreIcon /></TaskButton>
        <TaskButton aria-label="Courrier"><MailIcon /></TaskButton>
        <TaskButton $open aria-label="Chrome"><ChromeIcon /></TaskButton>
        <TaskButton $open aria-label="WhatsApp">
          <AppWithBadge><FaWhatsapp size={34} color="#25d366" /><CountBadge $right={4}>30</CountBadge></AppWithBadge>
        </TaskButton>
        <TaskButton $open aria-label="Visual Studio Code"><CodeIcon /></TaskButton>
        <Tray>
          <Weather><WeatherIcon /><span>16°C</span><span>Eclaircies</span></Weather>
          <TrayIcons>
            <Stroke size={17} w={2}><path d="M2 17L12 7l10 10" /></Stroke>
            <svg width="18" height="20" viewBox="0 0 18 20" fill="none" stroke="#fff" strokeWidth="1.400"><rect x="2.500" y="5" width="9" height="10" rx="1.500" /><path d="M12 9l3.500-2v6L12 11M3 2.500Q7 0 11 2.500M3 17.500Q7 20 11 17.500" /></svg>
            <svg width="20" height="12" viewBox="0 0 20 12" fill="none" stroke="#fff" strokeWidth="1.400"><path d="M.7.7h17v10.600H.7zM19.300 3.500v5" /><path d="M2.500 2.500h6v7h-6z" fill="#fff" stroke="none" /></svg>
            <svg width="18" height="18" viewBox="0 0 18 18" fill="none" stroke="#fff" strokeWidth="1.400"><path d="M1 17A16 16 0 0 1 17 2" opacity=".45" /><path d="M5 17A12 12 0 0 1 17 6M9 17A8 8 0 0 1 17 10" /><circle cx="15.500" cy="15.500" r="1.800" fill="#fff" stroke="none" /></svg>
            <span>ENG</span>
          </TrayIcons>
          <Clock>21:45<br />18/03/2025</Clock>
          <Notifications aria-label="Notifications">
            <svg width="20" height="20" viewBox="0 0 20 20"><path d="M0 0h20v16H11l-4 4v-4H0z" fill="#fff" /><path d="M4 4.500h12M4 8h12M4 11.500h7" stroke="#262422" strokeWidth="1.400" /></svg>
            <CountBadge $right={1}>8</CountBadge>
          </Notifications>
          <ShowDesktop />
        </Tray>
      </Taskbar>

      <Dialog role="dialog" aria-labelledby="caret-title">
        <DialogTitle id="caret-title">Activer la navigation au clavier ?</DialogTitle>
        <DialogText>Vous pouvez parcourir les pages à l'aide d'un curseur de texte. Pour désactiver la navigation au clavier, appuyez sur F7.</DialogText>
        <CheckRow><Check />Ne plus me demander</CheckRow>
        <DialogButtons>
          <DialogButton $primary>Activer</DialogButton>
          <DialogButton>Annuler</DialogButton>
        </DialogButtons>
      </Dialog>

      <Flyout>
        <FlyoutTitle>PROJETER</FlyoutTitle>
        {MODES.map(([mode, label]) => (
          <Mode key={mode} $active={mode === "pc"}><ModeIcon mode={mode} />{label}</Mode>
        ))}
        <WirelessLink href="#">Se connecter à un écran sans fil</WirelessLink>
      </Flyout>
    </Desktop>
  );
}
